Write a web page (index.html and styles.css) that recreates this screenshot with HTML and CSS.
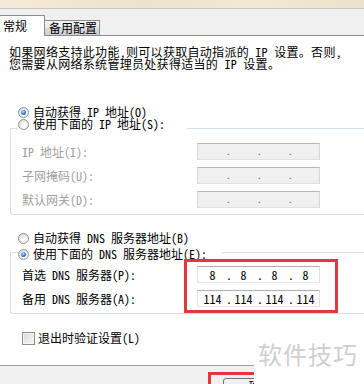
FILE: index.html
```html
<!DOCTYPE html>
<html lang="zh-CN">
<head>
<meta charset="utf-8">
<link rel="stylesheet" href="styles.css">
</head>
<body>
<div class="top"></div>
<div class="tabbar">
  <div class="tab active">常规</div>
  <div class="tab">备用配置</div>
</div>
<div class="content">
  <p class="intro">如果网络支持此功能，则可以获取自动指派的 IP 设置。否则，<br>您需要从网络系统管理员处获得适当的 IP 设置。</p>
  <div class="opt r1"><span class="radio on"></span><span>自动获得 IP 地址(O)</span></div>
  <div class="group g1">
    <div class="legend"><span class="ln ln-l"></span><span class="radio"></span><span class="ltext">使用下面的 IP 地址(S):</span><span class="ln ln-r"></span></div>
    <div class="fields f1">
      <span class="lbl off">IP 地址(I):</span>
      <div class="ip dis"><span class="oct"></span><span class="dot">.</span><span class="oct"></span><span class="dot">.</span><span class="oct"></span><span class="dot">.</span><span class="oct"></span></div>
      <span class="lbl off">子网掩码(U):</span>
      <div class="ip dis"><span class="oct"></span><span class="dot">.</span><span class="oct"></span><span class="dot">.</span><span class="oct"></span><span class="dot">.</span><span class="oct"></span></div>
      <span class="lbl off">默认网关(D):</span>
      <div class="ip dis"><span class="oct"></span><span class="dot">.</span><span class="oct"></span><span class="dot">.</span><span class="oct"></span><span class="dot">.</span><span class="oct"></span></div>
    </div>
  </div>
  <div class="opt r3"><span class="radio"></span><span>自动获得 DNS 服务器地址(B)</span></div>
  <div class="group g2">
    <div class="legend l2"><span class="ln ln-l"></span><span class="radio on"></span><span class="ltext">使用下面的 DNS 服务器地址(E):</span><span class="ln ln-r"></span></div>
    <div class="fields f2">
      <span class="lbl">首选 DNS 服务器(P):</span>
      <div class="ip"><span class="oct">8</span><span class="dot">.</span><span class="oct">8</span><span class="dot">.</span><span class="oct">8</span><span class="dot">.</span><span class="oct">8</span></div>
      <span class="lbl">备用 DNS 服务器(A):</span>
      <div class="ip"><span class="oct">114</span><span class="dot">.</span><span class="oct">114</span><span class="dot">.</span><span class="oct">114</span><span class="dot">.</span><span class="oct">114</span></div>
    </div>
  </div>
  <div class="opt chk"><span class="checkbox"></span><span>退出时验证设置(L)</span></div>
</div>
<div class="bottombar">
  <div class="btn">确定</div>
  <div class="mark mark2"></div>
</div>
<div class="mark mark1"></div>
<div class="watermark">软件技巧</div>
</body>
</html>
```

FILE: styles.css
```css
html, body {
  margin: 0;
  padding: 0;
  background: #fff;
  width: 364px;
  height: 384px;
  overflow: hidden;
}
body {
  position: relative;
  font-family: "Noto Sans CJK SC", "Noto Sans", sans-serif;
  font-size: 12px;
  color: #000;
  font-feature-settings: "hwid";
}
.top {
  height: 8px;
  background: linear-gradient(90deg, #f4ead9, #efe2cb 40%, #f3e8d6 70%, #eee1c9);
  border-bottom: 1px solid #c9c6c0;
}
.tabbar {
  height: 26px;
  background: #f0f0f0;
  border-bottom: 1px solid #898c95;
  display: flex;
  align-items: flex-end;
}
.tab {
  box-sizing: border-box;
  height: 15px;
  width: 55px;
  border: 1px solid #898c95;
  border-left: none;
  border-bottom: none;
  background: linear-gradient(#f2f2f2, #ebebeb 50%, #dddddd 51%, #cfcfcf);
  font-size: 12px;
  line-height: 14px;
  padding-left: 4px;
  white-space: nowrap;
}
.tab.active {
  width: 46px;
  height: 21px;
  margin-left: -1px;
  margin-bottom: -1px;
  border-left: 1px solid #898c95;
  background: #fff;
  line-height: 20px;
  padding-left: 3px;
  position: relative;
  z-index: 1;
}
.content {
  height: 329px;
  background: #fff;
  display: flex;
  flex-direction: column;
  overflow: hidden;
}
.intro {
  margin: 10px 0 0 9px;
  line-height: 12px;
  letter-spacing: 0.3px;
  white-space: nowrap;
}
.opt {
  display: flex;
  align-items: center;
  height: 12px;
  line-height: 12px;
  gap: 4px;
  margin-left: 18px;
  white-space: nowrap;
}
.r1 { margin-top: 36px; }
.r3 { margin-top: 17px; }
.chk { margin-top: 18px; margin-left: 22px; gap: 3px; }
.radio {
  box-sizing: border-box;
  width: 11px;
  height: 11px;
  border-radius: 50%;
  border: 1px solid #8f9194;
  background: radial-gradient(circle at 60% 65%, #ffffff 20%, #dfe0e1 70%);
  position: relative;
  flex: none;
}
.radio.on::after {
  content: "";
  position: absolute;
  left: 2px;
  top: 2px;
  width: 5px;
  height: 5px;
  border-radius: 50%;
  background: radial-gradient(circle at 40% 35%, #b9e1ff, #2a7fcf 55%, #0c4a8a);
}
.checkbox {
  box-sizing: border-box;
  width: 13px;
  height: 13px;
  border: 1px solid #8f8f8f;
  background: linear-gradient(135deg, #d9d9d9, #f7f7f7);
  box-shadow: inset 0 0 0 1px #f4f4f4;
  flex: none;
}
.group {
  margin-left: 10px;
  border-left: 1px solid #d5dfe5;
  border-bottom: 1px solid #d5dfe5;
  border-radius: 0 0 0 3px;
  display: flex;
  flex-direction: column;
}
.g1 { margin-top: 10px; }
.g2 { margin-top: 8px; }
.legend {
  display: flex;
  align-items: center;
  height: 12px;
  line-height: 12px;
  margin-top: -10px;
  white-space: nowrap;
}
.l2 { margin-top: -4px; }
.ln {
  align-self: flex-start;
  height: 0;
  border-top: 1px solid #d5dfe5;
  margin-top: 10px;
}
.l2 .ln { margin-top: 4px; }
.ln-l { width: 7px; }
.ln-r { flex: 1; margin-left: 22px; }
.l2 .ln-r { margin-left: 15px; }
.ltext { margin-left: 4px; }
.fields {
  display: grid;
  grid-template-columns: 175px 123px;
  grid-auto-rows: 17px;
  row-gap: 7px;
  align-items: center;
  padding-left: 11px;
  padding-bottom: 6px;
}
.f1 { margin-top: 13px; }
.f2 { margin-top: 6px; }
.lbl {
  white-space: nowrap;
  line-height: 16px;
}
.lbl.off { color: #a0a0a0; }
.ip {
  box-sizing: border-box;
  width: 123px;
  height: 17px;
  border: 1px solid;
  border-color: #abadb3 #dbdfe6 #e3e9ef #e2e3ea;
  background: #fff;
  display: flex;
  padding-left: 1px;
  line-height: 15px;
  font-size: 12px;
}
.ip.dis {
  background: #f0f0f0;
  border-color: #b5b5b5 #d8d8d8 #e0e0e0 #d8d8d8;
}
.oct { width: 27px; text-align: center; }
.dot { width: 4px; text-align: center; }
.ip.dis .dot { color: #555; font-size: 9px; }
.bottombar {
  position: relative;
  width: 254px;
  height: 18px;
  background: #f0f0f0;
  border-top: 1px solid #a0a0a0;
  overflow: hidden;
}
.btn {
  box-sizing: border-box;
  margin-left: 223px;
  margin-top: 12px;
  width: 75px;
  height: 22px;
  border: 1px solid #707070;
  border-radius: 3px;
  background: linear-gradient(#f2f2f2, #ebebeb 50%, #dddddd 51%, #cfcfcf);
  text-align: center;
  line-height: 14px;
}
.mark {
  position: absolute;
  box-sizing: border-box;
  border: 3px solid #e2383b;
}
.mark1 {
  left: 184px;
  top: 259px;
  width: 154px;
  height: 54px;
}
.mark2 {
  left: 208px;
  top: 6px;
  width: 90px;
  height: 40px;
}
.watermark {
  position: absolute;
  left: 258px;
  top: 339px;
  font-size: 24px;
  letter-spacing: 1px;
  line-height: 30px;
  color: #cfcfcf;
  white-space: nowrap;
  font-feature-settings: normal;
}
```
